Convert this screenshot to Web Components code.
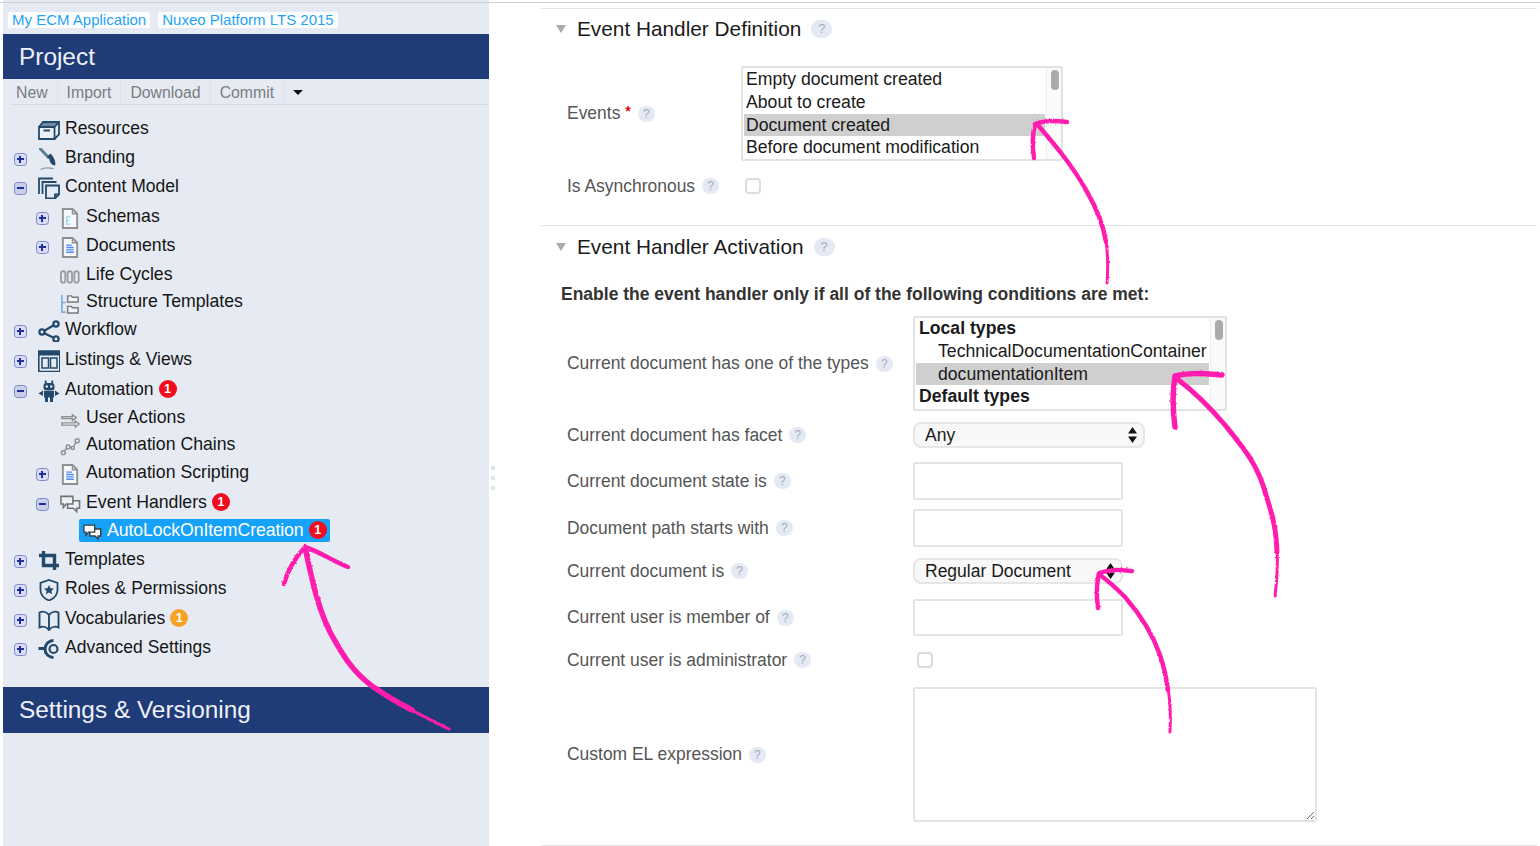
<!DOCTYPE html>
<html>
<head>
<meta charset="utf-8">
<title>Event Handler</title>
<style>
  html, body { margin: 0; padding: 0; height: 100%; background: #fff; overflow: hidden; }
  body { font-family: "Liberation Sans", Arial, sans-serif; }
</style>
</head>
<body>
<app-shell>
  <side-panel slot="side">
    <chip-link>My ECM Application</chip-link>
    <chip-link>Nuxeo Platform LTS 2015</chip-link>
  </side-panel>

  <form-section slot="main" heading="Event Handler Definition" label-width="174" first>
    <form-row label="Events" required style="margin-top:17px">
      <list-box options="Empty document created|About to create|*Document created|Before document modification"></list-box>
    </form-row>
    <form-row label="Is Asynchronous" style="margin-top:15px">
      <check-box inset="4"></check-box>
    </form-row>
  </form-section>

  <form-section slot="main" heading="Event Handler Activation" label-width="346">
    <p class="note" slot="note">Enable the event handler only if all of the following conditions are met:</p>
    <form-row label="Current document has one of the types" style="margin-top:12px">
      <list-box wide options="#Local types|>TechnicalDocumentationContainer|*>documentationItem|#Default types"></list-box>
    </form-row>
    <form-row label="Current document has facet" style="margin-top:11px"><select-box width="232">Any</select-box></form-row>
    <form-row label="Current document state is" style="margin-top:14px"><text-box></text-box></form-row>
    <form-row label="Document path starts with" style="margin-top:9px"><text-box></text-box></form-row>
    <form-row label="Current document is" style="margin-top:11px"><select-box width="210">Regular Document</select-box></form-row>
    <form-row label="Current user is member of" style="margin-top:15px"><text-box h="37"></text-box></form-row>
    <form-row label="Current user is administrator" style="margin-top:14px"><check-box inset="4"></check-box></form-row>
    <form-row label="Custom EL expression" style="margin-top:17px"><text-area></text-area></form-row>
  </form-section>

  <pink-arrows slot="over"></pink-arrows>
</app-shell>

<script>
const DARK = "#234a6c";
const GRAY = "#8e9092";

// icons for the tree, all in a 22x22 box
const ICONS = {
  resources: `<path d="M5 3h16l-4.500 5H1z" fill="${DARK}" opacity=".6"/><path d="M1 8h15.500v12H1z" fill="#eef1f6"/><g fill="none" stroke="${DARK}" stroke-width="1.800"><path d="M1 8h15.500v12H1z"/><path d="M1 8l4-5h16L16.500 8M16.500 20l4.500-4.500V3"/><path d="M5.500 11.500h6.500" stroke-width="2"/></g>`,
  branding: `<path d="M2.500 1l8 8.500" stroke="#5f7f98" stroke-width="3" stroke-linecap="round"/><path d="M9 8.500l3.500-3 3 3.500-3 3z" fill="${DARK}"/><path d="M11.500 11l3-2.500c2.400 2.500 3.200 5.500 2.800 9-3.600-.3-5.800-2.800-5.800-6.500z" fill="${DARK}"/><path d="M2.500 21.500c4-2 8-2 13-.8" fill="none" stroke="#7f98ac" stroke-width="1.300"/>`,
  model: `<g fill="none" stroke="${DARK}" stroke-width="1.800"><path d="M1 17V1.500h14"/><path d="M4.500 17V5h14"/><path d="M8 8.500h13v9l-4 4H8z" fill="#e6ebf3"/><path d="M17 21.500v-4h4"/></g>`,
  schema: `<path d="M3 1h10l5 5v15H3z" fill="#f6f8fb" stroke="${GRAY}" stroke-width="2"/><path d="M13 1v5h5" fill="none" stroke="${GRAY}" stroke-width="1.400"/><path d="M7 9v8h4M7 13h3M7 9h4" fill="none" stroke="#a6def4" stroke-width="1.700"/>`,
  doc: `<path d="M3 1h10l5 5v15H3z" fill="#f6f8fb" stroke="${GRAY}" stroke-width="2"/><path d="M13 1v5h5" fill="none" stroke="${GRAY}" stroke-width="1.400"/><path d="M6.500 8.500h6M6.500 11h8M6.500 13.500h8M6.500 16h8" stroke="#4f8df5" stroke-width="1.500"/>`,
  cycles: `<g fill="none" stroke="#9a9c9f" stroke-width="1.900"><rect x="1" y="5.500" width="4.600" height="12" rx="2.300"/><rect x="8" y="5.500" width="4.600" height="12" rx="2.300"/><rect x="15" y="5.500" width="4.600" height="12" rx="2.300"/></g>`,
  structure: `<path d="M2 2v18h4M2 10h4" fill="none" stroke="#79abe8" stroke-width="1.700"/><g fill="#f1f3f6" stroke="#77797c" stroke-width="1.500"><path d="M8 3h4l1 1.500h6v5H8z"/><path d="M8 14h4l1 1.500h6V21H8z"/></g>`,
  workflow: `<g fill="none" stroke="${DARK}" stroke-width="2.300"><circle cx="18" cy="4" r="2.600"/><circle cx="4" cy="12" r="2.600"/><circle cx="18" cy="19" r="2.600"/><path d="M6.300 10.700l9.400-5.400M6.300 13.300l9.400 4.400"/></g>`,
  listings: `<path d="M0.800 1h21v20.500h-21z" fill="none" stroke="${DARK}" stroke-width="1.600"/><path d="M0.800 1h21v4.500h-21z" fill="${DARK}"/><g fill="none" stroke="${DARK}" stroke-width="1.500"><rect x="4" y="8" width="6.500" height="10"/><rect x="12.500" y="8" width="6.500" height="10"/></g>`,
  robot: `<g fill="${DARK}"><rect x="5.500" y="3" width="11" height="7.500" rx="3"/><rect x="6" y="11" width="10" height="6.500"/><rect x="7" y="17" width="3" height="5"/><rect x="12" y="17" width="3" height="5"/><path d="M5 10.500v5.500L0.500 13.500zM17 10.500v5.500l4.500-2.500z"/><rect x="6.800" y="0.500" width="1.800" height="3"/><rect x="13.400" y="0.500" width="1.800" height="3"/></g><circle cx="8.800" cy="6.500" r="1.200" fill="#e6ebf3"/><circle cx="13.200" cy="6.500" r="1.200" fill="#e6ebf3"/>`,
  actions: `<g fill="none" stroke="${GRAY}" stroke-width="1.500"><path d="M2 8h11V6l4 3-4 3v-2H2z" fill="#f1f3f6"/><path d="M2 14.500h14v-2l4 3.200-4 3.200v-2H2z" fill="#f1f3f6"/></g>`,
  chains: `<g fill="none" stroke="${GRAY}" stroke-width="1.500"><circle cx="3.500" cy="17.500" r="2"/><circle cx="8.500" cy="11.500" r="2"/><circle cx="13.500" cy="12.500" r="1.600"/><circle cx="18" cy="5" r="2.200"/><path d="M4.500 15.500l2.600-2.400M10.500 11.800l1.600.3M14.500 11l2-4"/></g>`,
  events: `<g stroke="#6f7276" stroke-width="1.600" fill="#eef0f4"><path d="M8 7h12.500v8h-3v3.500L14 15H8z"/><path d="M1 2.500h12.500v8h-7L3.500 14v-3.500H1z"/></g>`,
  eventsOn: `<g stroke="#3a3f44" stroke-width="1.600" fill="#fff"><path d="M8 7h12.500v8h-3v3.500L14 15H8z"/><path d="M1 2.500h12.500v8h-7L3.500 14v-3.500H1z"/></g>`,
  templates: `<path d="M5.500 1v14.500H21M1 5.500h15.500V20" fill="none" stroke="${DARK}" stroke-width="3.400"/>`,
  roles: `<path d="M11 1l8.500 3v7c0 5-3.500 8.500-8.500 10.500C6 19.500 2.500 16 2.500 11V4z" fill="none" stroke="${DARK}" stroke-width="1.800"/><path d="M11 6l1.500 3.200 3.500.4-2.600 2.300.7 3.400-3.100-1.700-3.100 1.700.7-3.400L6 9.600l3.500-.4z" fill="${DARK}"/>`,
  vocab: `<path d="M11 6C9 3 5 2 1.500 3.500v15C5 17 9 18 11 21c2-3 6-4 9.500-2.500v-15C17 2 13 3 11 6zM11 6v15" fill="none" stroke="${DARK}" stroke-width="1.900"/>`,
  advanced: `<path d="M0.500 10.500h7" stroke="${DARK}" stroke-width="3"/><path d="M15.500 2.500a8 8 0 1 0 0 17" fill="none" stroke="${DARK}" stroke-width="3"/><circle cx="15.500" cy="11" r="4" fill="none" stroke="${DARK}" stroke-width="2.200"/>`
};

class AppShell extends HTMLElement {
  constructor() {
    super();
    this.attachShadow({ mode: "open" });
    this.shadowRoot.innerHTML = `
      <style>
        :host { display: flex; position: relative; width: 1540px; height: 846px; overflow: hidden; background: #fff; }
        #top { position: absolute; left: 0; right: 0; top: 2px; height: 1px; background: #cfd0d2; }
        #side { flex: none; margin-left: 3px; width: 486px; display: flex; }
        #split { flex: none; width: 52px; display: flex; flex-direction: column; align-items: flex-start; gap: 6px; padding: 466px 0 0 2px; box-sizing: border-box; }
        #split i { width: 4px; height: 4px; background: #dfe4ef; }
        #main { flex: 1; min-width: 0; padding-top: 8px; margin-right: 3px; }
      </style>
      <div id="top"></div>
      <div id="side"><slot name="side"></slot></div>
      <div id="split"><i></i><i></i><i></i></div>
      <div id="main"><slot name="main"></slot></div>
      <slot name="over"></slot>
    `;
  }
}

class ChipLink extends HTMLElement {
  constructor() {
    super();
    this.attachShadow({ mode: "open" });
    this.shadowRoot.innerHTML = `
      <style>
        :host { display: inline-block; background: #fff; color: #1ea4f7; font-size: 15px; line-height: 16px; height: 16px; padding: 0 4px; border-radius: 2px; white-space: nowrap; }
      </style>
      <slot></slot>
    `;
  }
}

class PanelHeader extends HTMLElement {
  constructor() {
    super();
    this.attachShadow({ mode: "open" });
    this.shadowRoot.innerHTML = `
      <style>
        :host { display: flex; align-items: center; height: 46px; padding-left: 16px; background: #1f3c78; color: #eef1f7; font-size: 24.400px; }
      </style>
      <slot></slot>
    `;
  }
}

class TreeRow extends HTMLElement {
  constructor() {
    super();
    this.attachShadow({ mode: "open" });
    this.shadowRoot.innerHTML = `
      <style>
        :host { display: block; font-size: 17.500px; color: #151515; white-space: nowrap; }
        :host([level="1"]), :host([level="2"]) { font-size: 17.700px; }
        #line { display: flex; align-items: center; height: 28px; }
        #toggle { flex: none; width: 13px; height: 13px; box-sizing: border-box; margin: 4px 11px 0 0; border: 1.500px solid #8088cc; border-radius: 3.500px; background: #d8dcf6; position: relative; }
        #toggle.minus { background: #c9cfe8; }
        #toggle::before { content: ""; position: absolute; left: 2px; right: 2px; top: 4px; height: 2px; background: #1c2f9c; }
        #toggle.plus::after { content: ""; position: absolute; top: 2px; bottom: 2px; left: 4px; width: 2px; background: #1c2f9c; }
        #toggle.none { visibility: hidden; }
        svg { flex: none; margin-top: 4px; display: block; }
        #text { margin-left: 5px; }
        #pill { display: flex; align-items: center; height: 23px; }
        :host([selected]) #pill { background: #16a2f8; color: #fff; border-radius: 2px; margin-left: 4px; padding: 0 3px 0 4px; letter-spacing: -0.090px; }
        .badge { flex: none; width: 18px; height: 18px; margin-left: 5px; border-radius: 50%; background: #ef0d1f; color: #fff; font-size: 12.500px; font-weight: bold; text-align: center; line-height: 18px; }
        .badge.warn { background: #f7a325; }
      </style>
      <div id="line"><span id="toggle"></span><div id="pill"></div></div>
    `;
  }

  connectedCallback() {
    const level = Number(this.getAttribute("level") || 0);
    const toggle = this.getAttribute("toggle");
    const icon = this.getAttribute("icon");
    const size = this.getAttribute("icon-size") || (level ? 21 : 22);
    const selected = this.hasAttribute("selected");

    this.style.height = this.getAttribute("h") + "px";
    // level 0 toggles start at x14, level 1 at x36; the selected row has no toggle
    this.shadowRoot.getElementById("line").style.paddingLeft = (selected ? 72 : 11 + level * 22) + "px";

    const t = this.shadowRoot.getElementById("toggle");
    if (selected) t.remove();
    else t.classList.add(toggle || "none");

    const pill = this.shadowRoot.getElementById("pill");
    pill.innerHTML = `<svg width="${size}" height="${size}" viewBox="0 0 22 22">${ICONS[icon]}</svg><span id="text"></span>`;
    pill.querySelector("#text").textContent = this.getAttribute("text");

    if (this.hasAttribute("badge")) {
      const b = document.createElement("span");
      b.className = "badge " + (this.getAttribute("badge-kind") || "");
      b.textContent = this.getAttribute("badge");
      pill.appendChild(b);
    }
  }
}

class ActionBar extends HTMLElement {
  constructor() {
    super();
    this.attachShadow({ mode: "open" });
    this.shadowRoot.innerHTML = `
      <style>
        :host { display: flex; align-items: stretch; height: 24px; margin: 1px 0 0 7px; border-bottom: 1px solid #d5d9e0; color: #7a7d80; font-size: 15.800px; }
        span { display: flex; align-items: center; padding: 2px 9px 0 6px; border-right: 1px solid #dde1e8; white-space: nowrap; }
        span + span { padding-left: 9px; }
        b { margin: 10px 0 0 9px; width: 0; height: 0; border: 5px solid transparent; border-top-color: #111; border-bottom: 0; }
      </style>
      <span>New</span><span>Import</span><span>Download</span><span>Commit</span><b></b>
    `;
  }
}

class SidePanel extends HTMLElement {
  constructor() {
    super();
    this.attachShadow({ mode: "open" });
    const rows = [
      ["", 0, "resources", "Resources", 29],
      ["plus", 0, "branding", "Branding", 29],
      ["minus", 0, "model", "Content Model", 30],
      ["plus", 1, "schema", "Schemas", 29],
      ["plus", 1, "doc", "Documents", 29],
      ["", 1, "cycles", "Life Cycles", 27],
      ["", 1, "structure", "Structure Templates", 28],
      ["plus", 0, "workflow", "Workflow", 30],
      ["plus", 0, "listings", "Listings & Views", 30],
      ["minus", 0, "robot", "Automation", 28, "1"],
      ["", 1, "actions", "User Actions", 27],
      ["", 1, "chains", "Automation Chains", 28],
      ["plus", 1, "doc", "Automation Scripting", 30],
      ["minus", 1, "events", "Event Handlers", 28, "1"],
      ["sel", 2, "eventsOn", "AutoLockOnItemCreation", 29, "1"],
      ["plus", 0, "templates", "Templates", 29],
      ["plus", 0, "roles", "Roles & Permissions", 30],
      ["plus", 0, "vocab", "Vocabularies", 29, "1", "warn"],
      ["plus", 0, "advanced", "Advanced Settings", 54]
    ];
    const tree = rows.map(([tg, lvl, ic, tx, h, badge, kind]) => {
      const attrs = [`level="${lvl}"`, `icon="${ic}"`, `text="${tx.replace("&", "&amp;")}"`, `h="${h}"`];
      if (tg === "sel") attrs.push("selected", 'icon-size="19"');
      else if (tg) attrs.push(`toggle="${tg}"`);
      if (badge) attrs.push(`badge="${badge}"`);
      if (kind) attrs.push(`badge-kind="${kind}"`);
      return `<tree-row ${attrs.join(" ")}></tree-row>`;
    }).join("");
    this.shadowRoot.innerHTML = `
      <style>
        :host { display: block; flex: 1; background: #e6ebf3; }
        #links { display: flex; gap: 8px; height: 34px; box-sizing: border-box; padding: 12px 0 0 5px; }
        #tree { padding-top: 9px; }
      </style>
      <div id="links"><slot></slot></div>
      <panel-header style="height:45px">Project</panel-header>
      <action-bar></action-bar>
      <div id="tree">${tree}</div>
      <panel-header>Settings &amp; Versioning</panel-header>
    `;
  }
}

class HelpMark extends HTMLElement {
  constructor() {
    super();
    this.attachShadow({ mode: "open" });
    this.shadowRoot.innerHTML = `
      <style>
        :host { display: inline-block; width: 17px; height: 16px; border-radius: 8px; background: #e4e9f4; color: #a3abbb; font-size: 12px; font-weight: normal; line-height: 16px; text-align: center; vertical-align: middle; }
      </style>
      ?
    `;
  }
}

class FormSection extends HTMLElement {
  constructor() {
    super();
    this.attachShadow({ mode: "open" });
    this.shadowRoot.innerHTML = `
      <style>
        :host { display: block; border-top: 1px solid #e2e3e5; color: #111; }
        :host([first]) { padding-bottom: 29px; }
        :host(:not([first])) { border-bottom: 1px solid #e2e3e5; height: 621px; box-sizing: border-box; }
        #title { display: flex; align-items: center; height: 40px; padding-left: 15px; font-size: 20.800px; color: #1a1a1a; }
        :host(:not([first])) #title { height: 42px; margin-bottom: -2px; }
        #title i { width: 0; height: 0; margin-right: 11px; border: 5.500px solid transparent; border-top: 8px solid #a9adb1; border-bottom: 0; }
        help-mark { margin-left: 10px; width: 21px; height: 18px; border-radius: 9px; line-height: 18px; font-size: 13px; }
        ::slotted(p) { margin: 18px 0 0 20px; font-size: 17.500px; line-height: 20px; font-weight: bold; color: #333; font-family: "Liberation Sans", Arial, sans-serif; white-space: nowrap; }
      </style>
      <div id="title"><i></i><span id="h"></span><help-mark></help-mark></div>
      <slot name="note"></slot>
      <slot></slot>
    `;
  }

  connectedCallback() {
    this.shadowRoot.getElementById("h").textContent = this.getAttribute("heading");
    this.style.setProperty("--label-width", this.getAttribute("label-width") + "px");
  }
}

class FormRow extends HTMLElement {
  constructor() {
    super();
    this.attachShadow({ mode: "open" });
    this.shadowRoot.innerHTML = `
      <style>
        :host { display: grid; grid-template-columns: var(--label-width) 1fr; align-items: center; padding-left: 26px; color: #555; font-size: 17.470px; }
        label { white-space: nowrap; display: flex; align-items: center; height: 20px; }
        em { color: #e3000f; font-style: normal; font-weight: bold; font-size: 14px; margin: -6px 0 0 5px; }
        help-mark { margin-left: 7px; }
      </style>
      <label><span id="t"></span><em hidden>*</em><help-mark></help-mark></label>
      <div><slot></slot></div>
    `;
  }

  connectedCallback() {
    this.shadowRoot.getElementById("t").textContent = this.getAttribute("label");
    if (this.hasAttribute("required")) this.shadowRoot.querySelector("em").hidden = false;
  }
}

class ListBox extends HTMLElement {
  constructor() {
    super();
    this.attachShadow({ mode: "open" });
    this.shadowRoot.innerHTML = `
      <style>
        :host { display: block; width: 322px; height: 95px; color: #1a1a1a; font-size: 17.650px; }
        :host([wide]) { width: 314px; }
        #box { display: flex; height: 100%; box-sizing: border-box; border: 2px solid #e2e2e2; border-radius: 2px; background: #fff; }
        ul { flex: 1; min-width: 0; margin: 0; padding: 0 1px; list-style: none; overflow: hidden; }
        :host([wide]) ul { margin-top: -1px; }
        li { height: 22.750px; line-height: 22.750px; padding-left: 2px; white-space: nowrap; }
        li.sel { background: #cfcfcf; }
        li.group { font-weight: bold; padding-left: 3px; }
        li.sub { padding-left: 22px; }
        #bar { flex: none; width: 15px; box-sizing: border-box; padding: 2px 0 0 4px; background: #fafafa; border-left: 1px solid #eee; }
        #bar i { display: block; width: 8px; height: 20px; border-radius: 4px; background: #ababab; }
      </style>
      <div id="box"><ul></ul><div id="bar"><i></i></div></div>
    `;
  }

  connectedCallback() {
    // option prefixes: * selected, # group heading, > indented
    const ul = this.shadowRoot.querySelector("ul");
    this.getAttribute("options").split("|").forEach((o) => {
      const li = document.createElement("li");
      if (o[0] === "*") { li.classList.add("sel"); o = o.slice(1); }
      if (o[0] === "#") { li.classList.add("group"); o = o.slice(1); }
      if (o[0] === ">") { li.classList.add("sub"); o = o.slice(1); }
      li.textContent = o;
      ul.appendChild(li);
    });
  }
}

class SelectBox extends HTMLElement {
  constructor() {
    super();
    this.attachShadow({ mode: "open" });
    this.shadowRoot.innerHTML = `
      <style>
        :host { display: flex; align-items: center; justify-content: space-between; box-sizing: border-box; height: 26px; padding: 0 6px 0 10px; border: 2px solid #e6e6e6; border-radius: 8px; background: #f8f8f8; color: #1a1a1a; font-size: 17.500px; }
        svg { display: block; }
      </style>
      <span><slot></slot></span>
      <svg width="9" height="16" viewBox="0 0 9 16"><path d="M4.500 0l4.500 6.500H0zM4.500 16L0 9.500h9z" fill="#111"/></svg>
    `;
  }

  connectedCallback() {
    this.style.width = this.getAttribute("width") + "px";
  }
}

class TextBox extends HTMLElement {
  constructor() {
    super();
    this.attachShadow({ mode: "open" });
    this.shadowRoot.innerHTML = `
      <style>
        :host { display: block; width: 210px; height: 38px; }
        input { display: block; width: 100%; height: 100%; margin: 0; padding: 0; box-sizing: border-box; border: 2px solid #e4e4e4; border-radius: 2px; background: #fff; outline: 0; }
      </style>
      <input type="text">
    `;
  }

  connectedCallback() {
    if (this.hasAttribute("h")) this.style.height = this.getAttribute("h") + "px";
  }
}

class TextArea extends HTMLElement {
  constructor() {
    super();
    this.attachShadow({ mode: "open" });
    this.shadowRoot.innerHTML = `
      <style>
        :host { display: block; width: 404px; height: 135px; }
        textarea { display: block; width: 404px; height: 135px; margin: 0; padding: 0; box-sizing: border-box; border: 2px solid #e4e4e4; border-radius: 2px; outline: 0; }
      </style>
      <textarea></textarea>
    `;
  }
}

class CheckBox extends HTMLElement {
  constructor() {
    super();
    this.attachShadow({ mode: "open" });
    this.shadowRoot.innerHTML = `
      <style>
        :host { display: block; width: 16px; height: 16px; box-sizing: border-box; border: 2px solid #dcdcdc; border-radius: 4px; background: #fff; }
      </style>
    `;
  }

  connectedCallback() {
    this.style.marginLeft = this.getAttribute("inset") + "px";
  }
}

class PinkArrows extends HTMLElement {
  constructor() {
    super();
    this.attachShadow({ mode: "open" });
    this.shadowRoot.innerHTML = `
      <style>
        :host { position: absolute; left: 0; top: 0; width: 1540px; height: 846px; pointer-events: none; }
        path { fill: none; stroke: #ff1fae; stroke-linecap: round; stroke-linejoin: round; }
      </style>
      <svg width="1540" height="846" viewBox="0 0 1540 846">
        <filter id="rough" x="-5%" y="-5%" width="110%" height="110%">
          <feTurbulence type="fractalNoise" baseFrequency="0.35" numOctaves="2" seed="4"/>
          <feDisplacementMap in="SourceGraphic" scale="2.500"/>
        </filter>
        <g filter="url(#rough)">
          <!-- events list -->
          <path stroke-width="3" d="M1107 283C1108 270 1108 255 1106 240"/>
          <path stroke-width="4.500" d="M1106 242C1103 222 1096 207 1086 190C1072 165 1055 145 1037 124"/>
          <path stroke-width="4.500" d="M1034 158C1032 145 1033 132 1035 124C1045 120 1056 121 1067 122"/>
          <!-- types list -->
          <path stroke-width="3" d="M1275 596C1277 580 1278 565 1277 550"/>
          <path stroke-width="5" d="M1277 552C1276 530 1274 520 1266 495C1258 465 1245 450 1225 425C1208 405 1192 390 1176 378"/>
          <path stroke-width="5.500" d="M1175 427C1172 405 1173 388 1175 376C1190 372 1205 373 1222 375"/>
          <!-- current document is -->
          <path stroke-width="3" d="M1170 732C1171 715 1170 700 1168 688"/>
          <path stroke-width="4.500" d="M1168 690C1166 675 1164 667 1160 655C1152 632 1138 612 1125 597C1115 587 1107 580 1100 575"/>
          <path stroke-width="4.500" d="M1098 608C1096 595 1097 582 1099 573C1110 569 1120 570 1132 571"/>
          <!-- selected event handler -->
          <path stroke-width="3" d="M449 729C435 722 422 716 410 709"/>
          <path stroke-width="5.500" d="M412 710C398 703 385 695 372 686C350 670 340 650 330 632C318 608 312 580 306 552"/>
          <path stroke-width="4.500" d="M284 584C287 572 295 558 305 547C318 551 333 561 348 567"/>
        </g>
      </svg>
    `;
  }
}

customElements.define("help-mark", HelpMark);
customElements.define("chip-link", ChipLink);
customElements.define("panel-header", PanelHeader);
customElements.define("action-bar", ActionBar);
customElements.define("tree-row", TreeRow);
customElements.define("side-panel", SidePanel);
customElements.define("form-section", FormSection);
customElements.define("form-row", FormRow);
customElements.define("list-box", ListBox);
customElements.define("select-box", SelectBox);
customElements.define("text-box", TextBox);
customElements.define("text-area", TextArea);
customElements.define("check-box", CheckBox);
customElements.define("pink-arrows", PinkArrows);
customElements.define("app-shell", AppShell);
</script>
</body>
</html>
